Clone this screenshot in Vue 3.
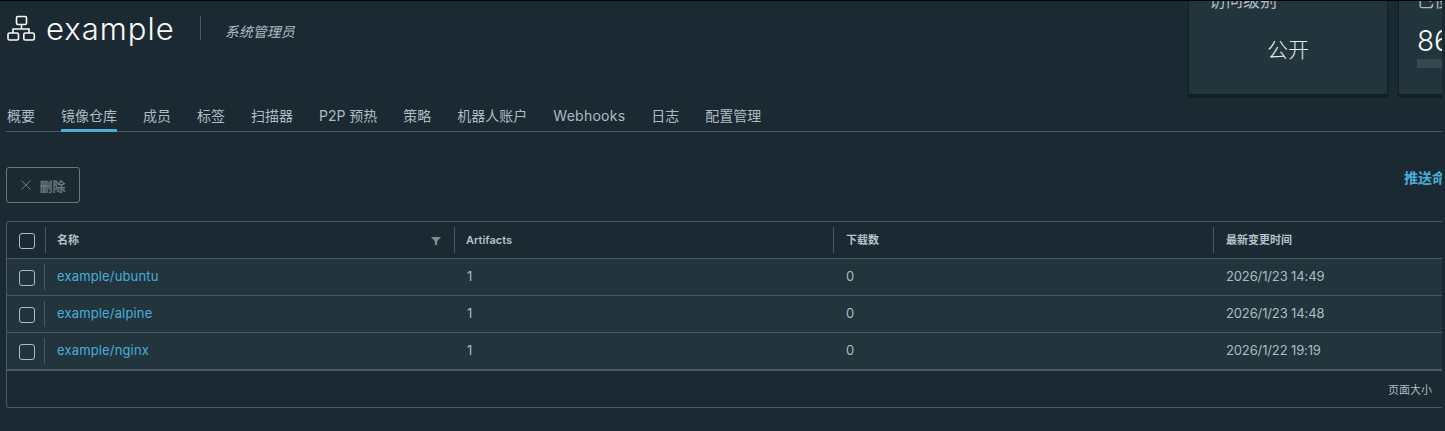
<template>
  <div class="page">
    <div class="head">
      <div class="title-block">
        <svg class="project-icon" width="30" height="30" viewBox="0 0 30 30" fill="none" stroke="#fafafa" stroke-width="1.6">
          <rect x="10.5" y="1.5" width="10" height="8" rx="1.4" />
          <path d="M15.5 9.5V14M7 18V14H23V18" />
          <rect x="2" y="18" width="10.5" height="7" rx="1.6" />
          <rect x="17.8" y="18" width="10.5" height="7" rx="1.6" />
        </svg>
        <span class="project-name">example</span>
        <span class="role">系统管理员</span>
      </div>
      <div class="cards">
        <div class="card">
          <div class="card-label">访问级别</div>
          <div class="card-value">公开</div>
        </div>
        <div class="card card-quota">
          <div class="card-label">已使用容量</div>
          <div class="quota-num">86.00MiB</div>
          <div class="quota-bar"></div>
        </div>
      </div>
    </div>

    <nav class="tabs">
      <a
        v-for="t in tabs"
        :key="t"
        class="tab"
        :class="{ active: t === '镜像仓库', latin: t === 'Webhooks' }"
      >{{ t }}</a>
    </nav>

    <div class="actions">
      <button class="del-btn">
        <svg width="12" height="12" viewBox="0 0 12 12" stroke="#6b777d" stroke-width="1" fill="none">
          <path d="M1.5 1.5L10.5 10.5M10.5 1.5L1.5 10.5" />
        </svg>
        <span>删除</span>
      </button>
      <a class="push">推送命令</a>
    </div>

    <div class="grid">
      <div class="row row-head">
        <div class="cell cell-check"><span class="check"></span></div>
        <div class="cell cell-name">
          <span>名称</span>
          <svg class="filter" width="10" height="10" viewBox="0 0 10 10">
            <path d="M0 1H10L6.2 5.2V9.6L3.8 8.4V5.2Z" fill="#7f8b91" />
          </svg>
        </div>
        <div class="cell">Artifacts</div>
        <div class="cell">下载数</div>
        <div class="cell">最新变更时间</div>
      </div>
      <div v-for="r in repos" :key="r.name" class="row row-body">
        <div class="cell cell-check"><span class="check"></span></div>
        <div class="cell cell-name"><a class="link">{{ r.name }}</a></div>
        <div class="cell">{{ r.artifacts }}</div>
        <div class="cell">{{ r.pulls }}</div>
        <div class="cell cell-time">{{ r.time }}</div>
      </div>
      <div class="grid-foot">页面大小</div>
    </div>
  </div>
</template>

<script setup>
const tabs = ['概要', '镜像仓库', '成员', '标签', '扫描器', 'P2P 预热', '策略', '机器人账户', 'Webhooks', '日志', '配置管理']

const repos = [
  { name: 'example/ubuntu', artifacts: 1, pulls: 0, time: '2026/1/23 14:49' },
  { name: 'example/alpine', artifacts: 1, pulls: 0, time: '2026/1/23 14:48' },
  { name: 'example/nginx', artifacts: 1, pulls: 0, time: '2026/1/22 19:19' },
]
</script>

<style>
html, body {
  margin: 0;
  background: #1b2a32;
}
</style>

<style scoped>
.page {
  width: 1445px;
  height: 431px;
  box-sizing: border-box;
  overflow: hidden;
  padding: 0 3px 0 6px;
  background: #1b2a32;
  border-top: 1px solid #000;
  font-family: Inter, "Noto Sans CJK SC", sans-serif;
  color: #adbbc4;
}

.head {
  display: flex;
  height: 97px;
  overflow: hidden;
}

.title-block {
  flex: none;
  width: 1182px;
  display: flex;
  align-items: flex-start;
  padding-top: 13px;
  box-sizing: border-box;
}

.project-icon {
  margin-top: 1px;
}

.project-name {
  margin-left: 10px;
  font-size: 31px;
  line-height: 30px;
  letter-spacing: 1px;
  color: #fafafa;
  font-weight: 300;
}

.role {
  margin-left: 25px;
  margin-top: 2px;
  padding-left: 24px;
  height: 24px;
  line-height: 32px;
  border-left: 1px solid #4b5a62;
  font-size: 14px;
  font-style: italic;
  color: #acbac3;
}

.cards {
  flex: none;
  display: flex;
  gap: 10px;
  margin-top: -20px;
}

.card {
  flex: none;
  width: 200px;
  height: 117px;
  box-sizing: border-box;
  padding: 9px 20px;
  background: #22343c;
  border: 1px solid #121e25;
  border-bottom-width: 4px;
  border-radius: 4px;
  overflow: hidden;
}

.card-label {
  font-size: 17px;
  line-height: 20px;
  white-space: nowrap;
}

.card-value {
  margin-top: 24px;
  text-align: center;
  font-size: 21px;
  line-height: 30px;
  color: #e9ecef;
  font-weight: 300;
}

.card-quota {
  padding-left: 18px;
}

.quota-num {
  margin-top: 13px;
  font-size: 28px;
  line-height: 35px;
  color: #fafafa;
  font-weight: 300;
  white-space: nowrap;
}

.quota-bar {
  height: 9px;
  background: #37474f;
}

.tabs {
  display: flex;
  gap: 26px;
  padding: 0 1px;
  height: 33px;
  border-bottom: 1px solid #4b5a62;
}

.tab {
  height: 34px;
  box-sizing: border-box;
  font-size: 14px;
  line-height: 36px;
  color: #adbbc4;
}

.tab.latin {
  letter-spacing: 0.25px;
}

.tab.active {
  border-bottom: 3px solid #4aaed9;
}

.actions {
  display: flex;
  justify-content: space-between;
  height: 36px;
  margin-top: 35px;
  overflow: hidden;
}

.del-btn {
  display: flex;
  align-items: center;
  justify-content: center;
  gap: 7px;
  width: 74px;
  height: 36px;
  padding: 0;
  border: 1px solid #6b777d;
  border-radius: 3px;
  background: transparent;
  font-family: inherit;
  font-size: 13px;
  font-weight: 700;
  color: #6b777d;
}

.push {
  width: 38px;
  overflow: hidden;
  white-space: nowrap;
  font-size: 14px;
  font-weight: 600;
  line-height: 22px;
  color: #4aaed9;
}

.grid {
  margin-top: 18px;
  height: 187px;
  box-sizing: border-box;
  border: 1px solid #4b5a62;
  border-right: 0;
  border-radius: 3px 0 0 3px;
  overflow: hidden;
}

.row {
  display: grid;
  grid-template-columns: 38px 409px 379px 380px 1fr;
  height: 37px;
  box-sizing: border-box;
  background: #22343c;
  border-bottom: 1px solid #4b5a62;
  font-size: 13px;
  line-height: 34px;
}

.row:nth-child(4) {
  height: 38px;
  border-bottom-width: 2px;
}

.row-head {
  background: transparent;
  font-size: 11px;
  font-weight: 600;
  line-height: 36px;
  color: #b5c2cb;
}

.cell {
  position: relative;
  padding-left: 12px;
  white-space: nowrap;
}

.row .cell:nth-child(n + 4),
.row-body .cell:nth-child(3) {
  padding-left: 13px;
}

.cell-time {
  letter-spacing: -0.13px;
}

.row-head .cell:not(:first-child)::before,
.row .cell-name::before {
  content: "";
  position: absolute;
  left: 0;
  top: 5px;
  bottom: 5px;
  width: 1px;
  background: #4b5a62;
}

.row-body .cell-name::before {
  left: -1px;
}

.cell-check {
  display: flex;
  align-items: center;
  padding-left: 12px;
}

.cell-name {
  display: flex;
  justify-content: space-between;
  padding-right: 13px;
  align-items: center;
}

.row-body .cell-name {
  padding-bottom: 2px;
}

.check {
  width: 14px;
  height: 14px;
  margin-top: 2px;
  border: 1px solid #adbbc4;
  border-radius: 3px;
}

.link {
  color: #4aaed9;
  letter-spacing: 0.15px;
}

.filter {
  margin-top: 2px;
}

.grid-foot {
  height: 37px;
  padding-right: 10px;
  text-align: right;
  font-size: 11px;
  line-height: 38px;
}
</style>
